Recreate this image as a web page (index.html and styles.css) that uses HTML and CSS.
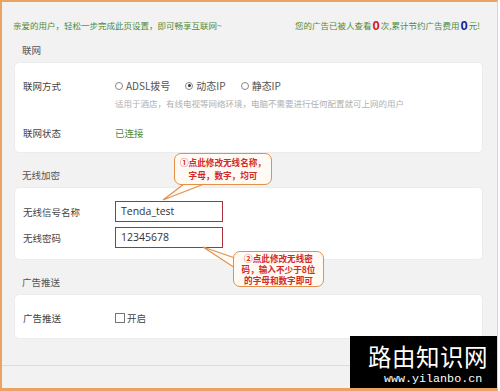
FILE: index.html
```html
<!DOCTYPE html>
<html lang="zh-CN">
<head>
  <meta charset="UTF-8" />
  <title>联网设置</title>
  <link rel="stylesheet" href="styles.css">
</head>
<body>
  <div class="frame">
    <div class="topbar">
      <span class="welcome">亲爱的用户，轻松一步完成此页设置，即可畅享互联网~</span>
      <span class="stats">您的广告已被人查看<b class="num red">0</b>次,累计节约广告费用<b class="num blue">0</b>元!</span>
    </div>

    <div class="group-title">联网</div>
    <div class="card card-net">
      <div class="row">
        <div class="label">联网方式</div>
        <div class="value radios">
          <label class="radio"><span class="dot"></span>ADSL拨号</label>
          <label class="radio on"><span class="dot"></span>动态IP</label>
          <label class="radio"><span class="dot"></span>静态IP</label>
        </div>
      </div>
      <div class="hint">适用于酒店，有线电视等网络环境，电脑不需要进行任何配置就可上网的用户</div>
      <div class="row status-row">
        <div class="label">联网状态</div>
        <div class="value ok">已连接</div>
      </div>
    </div>

    <div class="group-title">无线加密</div>
    <div class="card card-wifi">
      <div class="row">
        <div class="label">无线信号名称</div>
        <div class="value"><div class="field">Tenda_test</div></div>
      </div>
      <div class="row">
        <div class="label">无线密码</div>
        <div class="value"><div class="field">12345678</div></div>
      </div>
    </div>

    <div class="group-title">广告推送</div>
    <div class="card card-ad">
      <div class="row">
        <div class="label">广告推送</div>
        <div class="value"><label class="check"><span class="box"></span>开启</label></div>
      </div>
    </div>

    <div class="bottom-line"></div>

    <!-- callout tails -->
    <svg class="tails" width="500" height="391" viewBox="0 0 500 391">
      <polygon points="184,184 163,200 204,184" fill="#fffaf3" stroke="#e3904a" stroke-width="1.2" />
      <polygon points="235,258 203,247 235,268" fill="#fffaf3" stroke="#e3904a" stroke-width="1.2" />
    </svg>
    <div class="callout callout-1">
      <div class="cl">①点此修改无线名称，</div>
      <div class="cl">字母，数字，均可</div>
    </div>
    <div class="callout callout-2">
      <div class="cl">②点此修改无线密</div>
      <div class="cl">码，输入不少于8位</div>
      <div class="cl">的字母和数字即可</div>
    </div>

    <div class="watermark">
      <div class="wm-title">路由知识网</div>
      <div class="wm-url">www.yilanbo.cn</div>
    </div>
  </div>
</body>
</html>
```

FILE: styles.css
```css
body {
  margin: 0;
  background: #fff;
  font-family: "Noto Sans CJK SC", "Liberation Sans", sans-serif;
  color: #444;
}
.frame {
  position: relative;
  width: 498px;
  height: 391px;
  box-sizing: border-box;
  background: #f2f2f2;
  border-top: 2px solid #eba262;
  border-left: 2px solid #eba262;
  border-bottom: 3px solid #eba262;
  border-right: 1px solid #e2d3bf;
  padding: 12px 14px 0 12px;
  overflow: hidden;
}

.topbar {
  display: flex;
  justify-content: space-between;
  align-items: center;
  height: 22px;
  margin-bottom: 2px;
  font-size: 8.5px;
  color: #4f8a3c;
}
.welcome {
  margin-left: -1px;
}
.stats {
  margin-right: 3px;
  display: flex;
  align-items: center;
}
.num {
  font-family: "Liberation Sans", sans-serif;
  font-size: 13px;
  font-weight: 900;
  margin: 0 1px;
}
.red { color: #d8151b; }
.blue { color: #1a1a9c; }

.group-title {
  height: 24px;
  line-height: 24px;
  padding-left: 8px;
  font-size: 9.5px;
  color: #555;
}
.card {
  background: #fff;
  border-radius: 5px;
  border: 1px solid #ececec;
  padding: 0 8px;
  box-sizing: border-box;
  margin-bottom: 10px;
}
.card-net { height: 91px; padding-top: 15px; }
.card-wifi { height: 73px; padding-top: 13px; }
.card-ad { height: 45px; padding-top: 16px; }

.row {
  display: flex;
  align-items: center;
  min-height: 14px;
}
.card-wifi .row + .row { margin-top: 5px; }
.label {
  width: 92px;
  font-size: 9.5px;
  color: #444;
}
.value {
  font-size: 9.5px;
}
.ok { color: #4a8a3a; }
.hint {
  margin: 4px 0 0 92px;
  font-size: 8.5px;
  color: #b0b0b0;
  line-height: 12px;
}
.status-row { margin-top: 17px; }

.radios {
  display: flex;
  gap: 15px;
  color: #555;
  font-size: 10px;
}
.radio, .check {
  display: flex;
  align-items: center;
  gap: 3px;
}
.dot {
  width: 6px;
  height: 6px;
  border: 1px solid #888;
  border-radius: 50%;
  position: relative;
}
.radio.on .dot::after {
  content: "";
  position: absolute;
  left: 1.5px;
  top: 1.5px;
  width: 3px;
  height: 3px;
  border-radius: 50%;
  background: #333;
}
.box {
  width: 8px;
  height: 8px;
  border: 1px solid #777;
  margin-right: -1px;
}

.field {
  width: 108px;
  height: 21px;
  box-sizing: border-box;
  border: 1.5px solid #ab2f3d;
  padding-left: 5px;
  line-height: 18px;
  font-family: "Open Sans", "Liberation Sans", sans-serif;
  font-size: 10.5px;
  color: #333;
}

.bottom-line {
  margin-top: 26px;
  margin-left: -12px;
  margin-right: -14px;
  border-top: 1px solid #dcdcdc;
}

.tails {
  position: absolute;
  left: -2px;
  top: -2px;
  z-index: 1;
}
.callout {
  position: absolute;
  z-index: 2;
  box-sizing: border-box;
  background: #fffaf3;
  border: 1.2px solid #e3904a;
  border-radius: 7px;
  color: #d22a2a;
  font-weight: bold;
  font-size: 8.6px;
  text-align: center;
  display: flex;
  flex-direction: column;
  justify-content: center;
}
.cl {
  height: 11px;
  line-height: 11px;
}
.callout-1 {
  left: 172px;
  top: 151px;
  width: 98px;
  height: 32px;
  gap: 2px;
}
.callout-2 {
  left: 231px;
  top: 249px;
  width: 91px;
  height: 36px;
}

.watermark {
  position: absolute;
  left: 348px;
  top: 334px;
  width: 152px;
  height: 60px;
  background: #000;
  color: #fff;
  z-index: 3;
}
.wm-title {
  font-size: 23.5px;
  line-height: 28px;
  margin: 6px 0 0 18px;
  letter-spacing: 0.5px;
}
.wm-url {
  font-family: "Liberation Mono", monospace;
  font-size: 11.7px;
  line-height: 14px;
  margin: 2px 0 0 34px;
}
```
